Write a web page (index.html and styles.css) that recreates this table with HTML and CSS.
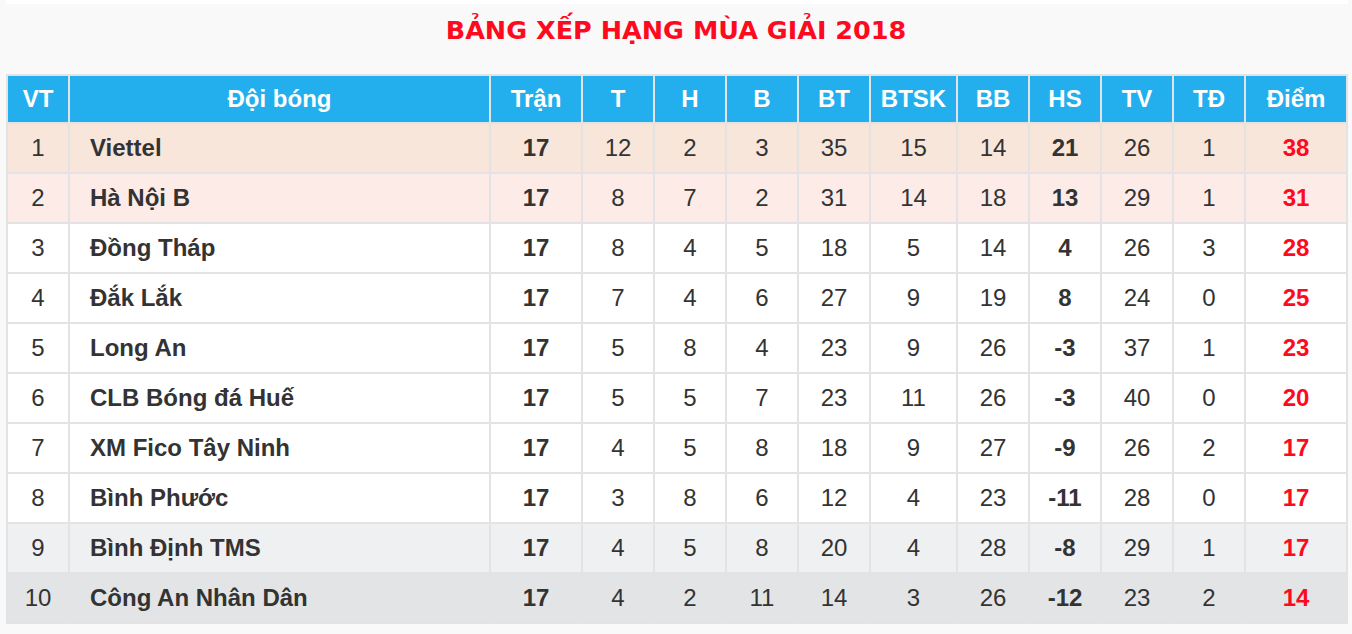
FILE: index.html
```html
<!DOCTYPE html>
<html lang="vi">
<head>
<meta charset="utf-8">
<title>Bảng xếp hạng mùa giải 2018</title>
<link rel="stylesheet" href="styles.css">
</head>
<body>
<div class="topbar"></div>
<h1 class="title">BẢNG XẾP HẠNG MÙA GIẢI 2018</h1>
<table class="standings">
  <colgroup>
    <col class="c-vt"><col class="c-team"><col class="c-tran"><col class="c-n"><col class="c-n"><col class="c-n"><col class="c-n"><col class="c-btsk"><col class="c-n"><col class="c-n"><col class="c-n"><col class="c-n"><col class="c-diem">
  </colgroup>
  <thead>
    <tr><th>VT</th><th>Đội bóng</th><th>Trận</th><th>T</th><th>H</th><th>B</th><th>BT</th><th>BTSK</th><th>BB</th><th>HS</th><th>TV</th><th>TĐ</th><th>Điểm</th></tr>
  </thead>
  <tbody>
    <tr class="r-first"><td>1</td><td class="team">Viettel</td><td class="b">17</td><td>12</td><td>2</td><td>3</td><td>35</td><td>15</td><td>14</td><td class="b">21</td><td>26</td><td>1</td><td class="pts">38</td></tr>
    <tr class="r-second"><td>2</td><td class="team">Hà Nội B</td><td class="b">17</td><td>8</td><td>7</td><td>2</td><td>31</td><td>14</td><td>18</td><td class="b">13</td><td>29</td><td>1</td><td class="pts">31</td></tr>
    <tr><td>3</td><td class="team">Đồng Tháp</td><td class="b">17</td><td>8</td><td>4</td><td>5</td><td>18</td><td>5</td><td>14</td><td class="b">4</td><td>26</td><td>3</td><td class="pts">28</td></tr>
    <tr><td>4</td><td class="team">Đắk Lắk</td><td class="b">17</td><td>7</td><td>4</td><td>6</td><td>27</td><td>9</td><td>19</td><td class="b">8</td><td>24</td><td>0</td><td class="pts">25</td></tr>
    <tr><td>5</td><td class="team">Long An</td><td class="b">17</td><td>5</td><td>8</td><td>4</td><td>23</td><td>9</td><td>26</td><td class="b">-3</td><td>37</td><td>1</td><td class="pts">23</td></tr>
    <tr><td>6</td><td class="team">CLB Bóng đá Huế</td><td class="b">17</td><td>5</td><td>5</td><td>7</td><td>23</td><td>11</td><td>26</td><td class="b">-3</td><td>40</td><td>0</td><td class="pts">20</td></tr>
    <tr><td>7</td><td class="team">XM Fico Tây Ninh</td><td class="b">17</td><td>4</td><td>5</td><td>8</td><td>18</td><td>9</td><td>27</td><td class="b">-9</td><td>26</td><td>2</td><td class="pts">17</td></tr>
    <tr><td>8</td><td class="team">Bình Phước</td><td class="b">17</td><td>3</td><td>8</td><td>6</td><td>12</td><td>4</td><td>23</td><td class="b">-11</td><td>28</td><td>0</td><td class="pts">17</td></tr>
    <tr class="r-ninth"><td>9</td><td class="team">Bình Định TMS</td><td class="b">17</td><td>4</td><td>5</td><td>8</td><td>20</td><td>4</td><td>28</td><td class="b">-8</td><td>29</td><td>1</td><td class="pts">17</td></tr>
    <tr class="r-last"><td>10</td><td class="team">Công An Nhân Dân</td><td class="b">17</td><td>4</td><td>2</td><td>11</td><td>14</td><td>3</td><td>26</td><td class="b">-12</td><td>23</td><td>2</td><td class="pts">14</td></tr>
  </tbody>
</table>
</body>
</html>
```
FILE: styles.css
```css
html, body {
  margin: 0;
  padding: 0;
  background: #f9f9f9;
}
body {
  font-family: "Liberation Sans", Arial, sans-serif;
  color: #333;
}
.topbar {
  height: 4px;
  background: #fff;
  margin: 0 4px 0 6px;
}
.title {
  margin: 0;
  height: 52px;
  line-height: 52px;
  text-align: center;
  font-family: "DejaVu Sans", Verdana, sans-serif;
  font-weight: bold;
  font-size: 25.5px;
  color: #fe0a1f;
}
.standings {
  margin: 18px 0 0 6px;
  width: 1342px;
  table-layout: fixed;
  border-collapse: separate;
  border-spacing: 2px;
  background: #e3e3e3;
  font-size: 24px;
}
.c-vt { width: 60px; }
.c-team { width: 419px; }
.c-tran { width: 90px; }
.c-n { width: 70px; }
.c-btsk { width: 85px; }
.c-diem { width: 100px; }
.standings th {
  height: 46px;
  padding: 0;
  background: #23afed;
  color: #fff;
  font-weight: bold;
  text-align: center;
  vertical-align: middle;
}
.standings td {
  height: 48px;
  padding: 0;
  background: #fff;
  text-align: center;
  vertical-align: middle;
  font-weight: normal;
}
.standings td.team {
  text-align: left;
  padding-left: 20px;
  font-weight: bold;
}
.standings td.b { font-weight: bold; }
.standings td.pts { font-weight: bold; color: #fe0a1f; }
.standings tr.r-first td { background: #f8e6db; }
.standings tr.r-second td { background: #fdebe8; }
.standings tr.r-ninth td { background: #eff0f2; }
.standings tr.r-last td { background: #e3e4e6; }
```
